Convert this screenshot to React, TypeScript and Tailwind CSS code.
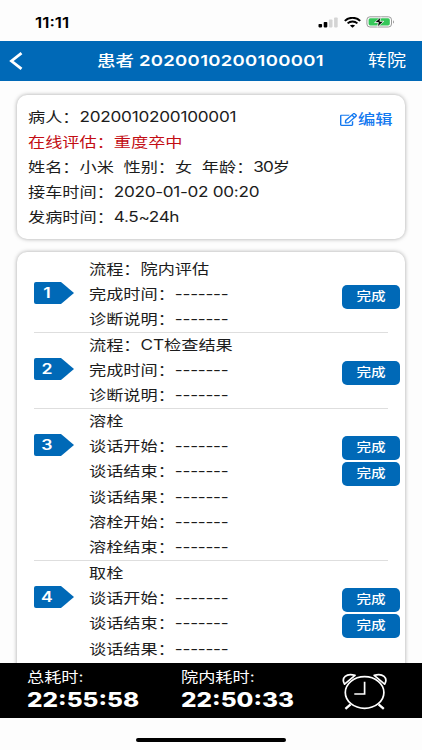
import type { ReactNode } from "react"
import clsx from "clsx"
import { FaRegEdit } from "react-icons/fa"

type Step = {
  id: number
  title: string
  fields: string[]
  buttons: number
}

const steps: Step[] = [
  { id: 1, title: "流程：院内评估", fields: ["完成时间：", "诊断说明："], buttons: 1 },
  { id: 2, title: "流程：CT检查结果", fields: ["完成时间：", "诊断说明："], buttons: 1 },
  { id: 3, title: "溶栓", fields: ["谈话开始：", "谈话结束：", "谈话结果：", "溶栓开始：", "溶栓结束："], buttons: 2 },
  { id: 4, title: "取栓", fields: ["谈话开始：", "谈话结束：", "谈话结果："], buttons: 2 },
]

// Wide text, all labels on this screen are stretched horizontally
function Wide({ children, className }: { children: ReactNode; className?: string }) {
  return (
    <span className={clsx("inline-block origin-left scale-x-[1.218] whitespace-pre", className)}>{children}</span>
  )
}

function StatusBar() {
  return (
    <div className="flex h-[41px] shrink-0 items-center justify-between pt-[3px] pr-[27px] pl-[35px] text-black">
      <Wide className="text-[14px] font-semibold">11:11</Wide>
      <div className="flex items-center">
        <svg width="20" height="11" viewBox="0 0 20 11">
          <rect x="0.5" y="7" width="3.6" height="3.4" rx="0.8" fill="#000" />
          <rect x="5.7" y="5" width="3.6" height="5.4" rx="0.8" fill="#000" />
          <rect x="10.9" y="2.5" width="3.6" height="7.9" rx="0.8" fill="#d4d4d4" />
          <rect x="16.1" y="0.5" width="3.6" height="9.9" rx="0.8" fill="#d4d4d4" />
        </svg>
        <svg className="ml-[6px]" width="17" height="11" viewBox="0 0 17 11" fill="none" stroke="#000">
          <path d="M0.8 3.9C5 -0.2 12 -0.2 16.2 3.9" strokeWidth="2" />
          <path d="M3.6 6.4C6.3 3.8 10.7 3.8 13.4 6.4" strokeWidth="1.9" />
          <path d="M8.5 10.8L5.9 8.6C7.3 7.4 9.7 7.4 11.1 8.6Z" fill="#000" stroke="none" />
        </svg>
        <svg className="ml-[5px]" width="29" height="12" viewBox="0 0 29 12">
          <rect x="0.9" y="0.8" width="24.6" height="10.2" rx="3" fill="none" stroke="#9a9a9a" />
          <rect x="2.6" y="2.3" width="21.2" height="7.2" rx="1.7" fill="#35c759" />
          <path d="M27 4.2C28.3 4.7 28.3 7.1 27 7.6Z" fill="#9a9a9a" />
          <path d="M15.1 0.8L8.6 6.5H12.4L11.2 11.2L17.8 5.3H13.9Z" fill="#000" stroke="#fff" strokeWidth="0.8" />
        </svg>
      </div>
    </div>
  )
}

function Header() {
  return (
    <header className="flex h-10 shrink-0 items-center bg-[#0069b7] text-white">
      <svg className="ml-[9px]" width="14" height="18" viewBox="0 0 14 18" fill="none" stroke="#fff" strokeWidth="2.8">
        <path d="M12.5 1.2L2.5 9L12.5 16.8" />
      </svg>
      <h1 className="ml-[74px] w-[271px] text-[15.2px] font-medium">
        <Wide>
          患者 <span className="font-semibold tracking-[0.25px]">2020010200100001</span>
        </Wide>
      </h1>
      <Wide className="text-[15.6px]">转院</Wide>
    </header>
  )
}

function PatientCard() {
  return (
    <section className="flex h-[144px] justify-between rounded-[10px] bg-white pt-[9px] pr-[13px] pl-[11px] shadow-[0_0_4px_rgba(0,0,0,0.35)]">
      <div className="text-[14.1px] leading-[25px]">
        <p><Wide>病人：<span className="tracking-[-0.2px]">2020010200100001</span></Wide></p>
        <p className="text-[#c30d14]"><Wide>在线评估：重度卒中</Wide></p>
        <p><Wide>姓名：小米  性别：女  年龄：<span className="tracking-[-0.8px]">30</span>岁</Wide></p>
        <p><Wide>接车时间：<span className="tracking-[-0.25px]">2020-01-02 00:20</span></Wide></p>
        <p><Wide>发病时间：<span className="tracking-[-0.3px]">4.5~24h</span></Wide></p>
      </div>
      <button className="mt-[3px] flex h-6 w-[52px] items-center text-[#1479f0]">
        <FaRegEdit className="h-[13px] w-[17px] shrink-0" preserveAspectRatio="none" />
        <Wide className="ml-px text-[14.2px] font-medium">编辑</Wide>
      </button>
    </section>
  )
}

function StepTag({ id }: { id: number }) {
  return (
    <div className="relative mt-[25px] h-[22px] w-10">
      <svg className="absolute inset-0" width="40" height="22" viewBox="0 0 40 22">
        <path d="M2 0H27L40 11L27 22H2Q0 22 0 20V2Q0 0 2 0Z" fill="#0069b7" />
      </svg>
      <span className="relative block w-[26px] scale-x-[1.218] text-center text-[14.5px] leading-[22px] font-semibold text-white">
        {id}
      </span>
    </div>
  )
}

function StepRow({ step }: { step: Step }) {
  const double = step.buttons > 1
  return (
    <li className="flex items-start last:*:border-b-0">
      <div className="flex w-[354px] shrink-0 border-b border-[#dedede]">
        <StepTag id={step.id} />
        <div className="ml-[15px] text-[14.1px]">
          <p className="h-[25px] leading-[24px]"><Wide>{step.title}</Wide></p>
          {step.fields.map((field, i) => (
            <p
              key={field}
              className={clsx("leading-[24px]", double && i < 2 ? "h-[25.7px]" : "h-[24.9px]")}
            >
              <Wide>{field}<span className="tracking-[-0.2px]">-------</span></Wide>
            </p>
          ))}
        </div>
      </div>
      <div className={clsx("-ml-[46px] flex flex-col gap-[2px]", double ? "pt-[27px]" : "pt-[28px]")}>
        {Array.from({ length: step.buttons }, (_, i) => (
          <button key={i} className="h-6 w-[58px] rounded-[5px] bg-[#0069b7] text-[12px] leading-6 font-medium text-white">
            <span className="inline-block scale-x-[1.218]">完成</span>
          </button>
        ))}
      </div>
    </li>
  )
}

function AlarmIcon() {
  return (
    <svg width="46" height="38" viewBox="0 0 46 38" fill="none" stroke="#fff" strokeWidth="1.7">
      <ellipse cx="23.6" cy="20.5" rx="19.3" ry="15.8" />
      <path d="M23.6 9.7V22H13.3" />
      <path d="M3.6 12.2C-0.2 6 5.5 0.6 14 3.4Z" strokeLinejoin="round" />
      <path d="M43.6 12.2C47.4 6 41.7 0.6 33.2 3.4Z" strokeLinejoin="round" />
      <path d="M9.6 32.4L4.4 36.8M37.6 32.4L42.8 36.8" strokeWidth="2.4" />
    </svg>
  )
}

function Timer({ label, value }: { label: string; value: string }) {
  return (
    <div className="w-[154px]">
      <p className="h-[25px] text-[14.1px] leading-[27px]"><Wide>{label}</Wide></p>
      <p className="text-[20px] leading-6 font-extrabold"><Wide>{value}</Wide></p>
    </div>
  )
}

export default function App() {
  return (
    <div className="flex h-[750px] w-[422px] flex-col overflow-hidden bg-[#fdfdfd] font-['Inter','Noto_Sans_CJK_SC',sans-serif] text-[#1c1c1c]">
      <StatusBar />
      <Header />
      <main className="min-h-0 flex-1 overflow-hidden px-[17px] pt-[14px]">
        <PatientCard />
        <ul className="mt-[13px] rounded-[10px] bg-white pt-[5px] pb-10 pl-[17px] shadow-[0_0_4px_rgba(0,0,0,0.35)]">
          {steps.map((step) => (
            <StepRow key={step.id} step={step} />
          ))}
        </ul>
      </main>
      <footer className="flex h-[55px] shrink-0 bg-black pl-[27px] text-white">
        <Timer label="总耗时:" value="22:55:58" />
        <Timer label="院内耗时:" value="22:50:33" />
        <div className="mt-[9px] ml-[6px]">
          <AlarmIcon />
        </div>
      </footer>
      <div className="flex h-8 shrink-0 justify-center pt-5">
        <div className="h-[4px] w-[150px] rounded-full bg-black" />
      </div>
    </div>
  )
}
